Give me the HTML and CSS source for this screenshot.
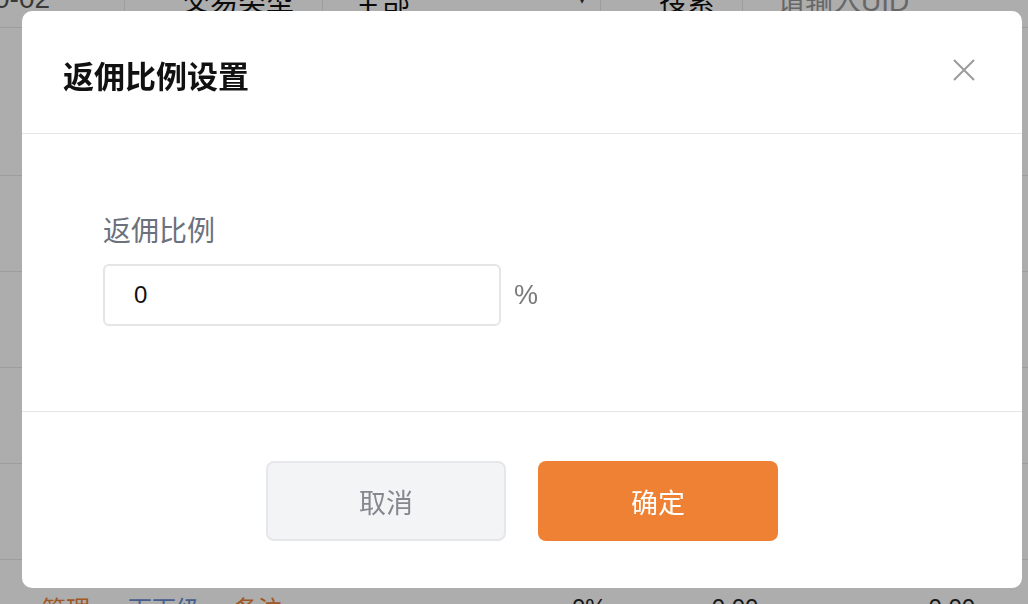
FILE: index.html
```html
<html>

<head>
    <meta charset="utf-8">
    <title>返佣比例设置</title>
    <link rel="stylesheet" href="styles.css">
</head>

<body>
    <!-- page behind the dialog, scrolled a little -->
    <div class="page">
        <div class="toolbar">
            <div class="cell c1">0-02</div>
            <div class="cell c2">交易类型</div>
            <div class="cell c3"><span>全部</span><span class="caret">▾</span></div>
            <div class="cell c4">搜索</div>
            <div class="cell c5 placeholder">请输入UID</div>
        </div>
        <div class="row row-head"><span class="edge-text">设置</span></div>
        <div class="row"></div>
        <div class="row"></div>
        <div class="row"></div>
        <div class="row"></div>
        <div class="row row-last">
            <span class="op orange">管理</span>
            <span class="op blue">下下级</span>
            <span class="op orange">备注</span>
            <span class="num n1">0%</span>
            <span class="num n2">0.00</span>
            <span class="num n3">0.00</span>
        </div>
    </div>

    <div class="mask">
        <div class="dialog">
            <div class="dialog-header">
                <div class="dialog-title">返佣比例设置</div>
                <span class="dialog-close">
                    <svg width="22" height="22" viewBox="0 0 22 22">
                        <path d="M1 1 L21 21 M21 1 L1 21" stroke="#9b9b9b" stroke-width="2" fill="none" />
                    </svg>
                </span>
            </div>
            <div class="dialog-body">
                <div class="field-label">返佣比例</div>
                <div class="field-row">
                    <input class="field-input" type="text" value="0">
                    <span class="field-unit">%</span>
                </div>
            </div>
            <div class="dialog-footer">
                <button class="btn btn-cancel">取消</button>
                <button class="btn btn-ok">确定</button>
            </div>
        </div>
    </div>
</body>

</html>
```

FILE: styles.css
```css
body {
    margin: 0;
    font-family: "Liberation Sans", "Noto Sans CJK SC", sans-serif;
    background: #fff;
    overflow: hidden;
}

/* background page */
.page {
    margin-top: -30px;
    width: 1028px;
}

.toolbar {
    display: flex;
    height: 57px;
    border-bottom: 1px solid #e8e8e8;
    font-size: 28px;
    color: #111;
}

.cell {
    display: flex;
    align-items: center;
    box-sizing: border-box;
    border-right: 1px solid #e8e8e8;
}

.c1 {
    width: 125px;
    text-indent: -6px;
    color: #555;
}

.c2 {
    width: 198px;
    padding-left: 57px;
}

.c3 {
    width: 278px;
    padding: 0 14px 0 31px;
    justify-content: space-between;
}

.caret {
    font-size: 16px;
    color: #333;
}

.c4 {
    width: 142px;
    padding-left: 58px;
}

.c5 {
    flex: 1;
    padding-left: 34px;
    border-right: none;
}

.placeholder {
    color: #999;
}

.row {
    height: 95px;
    border-bottom: 1px solid #e8e8e8;
    position: relative;
    display: flex;
    align-items: center;
    font-size: 24px;
}

.row-head {
    height: 147px;
    justify-content: flex-end;
    color: #333;
}

.edge-text {
    margin-right: -50px;
    padding-bottom: 40px;
}

.row-last {
    border-bottom: none;
}

.op {
    margin-left: 42px;
}

.op.blue {
    margin-left: 38px;
}

.op.blue + .op {
    margin-left: 34px;
}

.orange {
    color: #ee8133;
}

.blue {
    color: #6a8bd0;
}

.num {
    color: #222;
}

.n1 {
    margin-left: 290px;
}

.n2 {
    margin-left: 105px;
}

.n3 {
    margin-left: 170px;
}

/* dialog */
.mask {
    position: fixed;
    top: 0;
    left: 0;
    right: 0;
    bottom: 0;
    background: rgba(0, 0, 0, 0.32);
}

.dialog {
    position: absolute;
    left: 22px;
    top: 11px;
    width: 1000px;
    height: 577px;
    background: #fff;
    border-radius: 10px;
    display: flex;
    flex-direction: column;
}

.dialog-header {
    position: relative;
    height: 123px;
    box-sizing: border-box;
    padding: 51px 41px 0 41px;
    border-bottom: 1px solid #e6e6e6;
}

.dialog-title {
    font-size: 31px;
    line-height: 32px;
    font-weight: bold;
    color: #111;
}

.dialog-close {
    position: absolute;
    right: 47px;
    top: 48px;
    width: 22px;
    height: 22px;
}

.dialog-body {
    height: 278px;
    box-sizing: border-box;
    padding: 84px 81px 0 81px;
    border-bottom: 1px solid #e6e6e6;
}

.field-label {
    font-size: 28px;
    line-height: 28px;
    color: #6b717d;
    margin-bottom: 18px;
}

.field-row {
    display: flex;
    align-items: center;
    gap: 13px;
}

.field-input {
    width: 398px;
    height: 62px;
    box-sizing: border-box;
    border: 2px solid #e5e5e5;
    border-radius: 6px;
    padding: 0 0 0 29px;
    font-family: "Liberation Sans", "Noto Sans CJK SC", sans-serif;
    font-size: 24px;
    color: #111;
    outline: none;
}

.field-unit {
    font-size: 27px;
    color: #7a7a7a;
}

.dialog-footer {
    flex: 1;
    display: flex;
    justify-content: center;
    gap: 32px;
    padding-top: 49px;
    box-sizing: border-box;
}

.btn {
    width: 240px;
    height: 80px;
    box-sizing: border-box;
    border-radius: 8px;
    font-family: "Liberation Sans", "Noto Sans CJK SC", sans-serif;
    font-size: 27px;
    cursor: pointer;
}

.btn-cancel {
    background: #f3f4f6;
    border: 2px solid #e6e7ea;
    color: #85888e;
}

.btn-ok {
    background: #ee8133;
    border: none;
    color: #fff;
}
```
